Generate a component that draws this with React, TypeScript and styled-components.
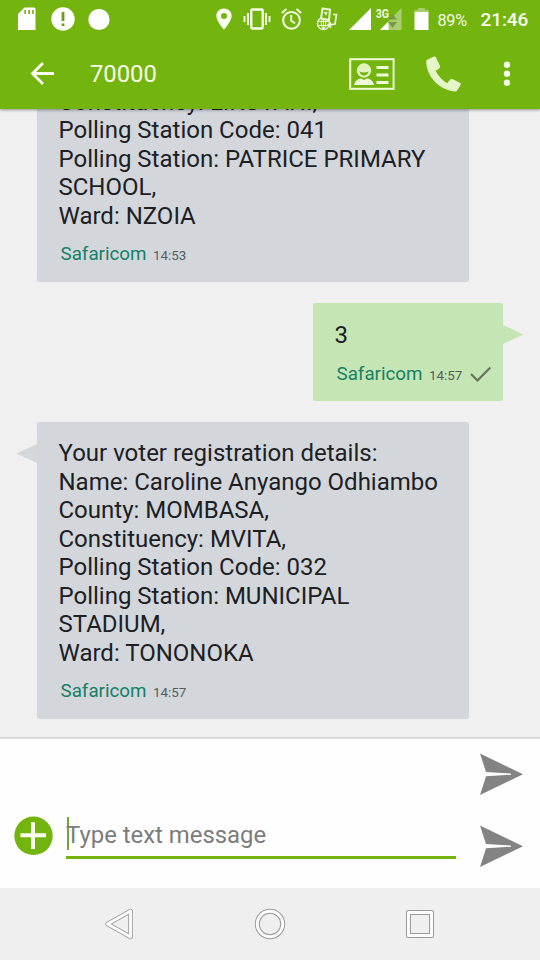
import React from "react";
import styled, { createGlobalStyle } from "styled-components";

const GREEN = "#74b40f";

const GlobalStyle = createGlobalStyle`
  * { box-sizing: border-box; }
  body { margin: 0; background: #f0f0f0; font-family: Roboto, "Liberation Sans", sans-serif; }
`;

const Screen = styled.main`
  display: flex;
  flex-direction: column;
  width: 540px;
  height: 960px;
  overflow: hidden;
  background: #f0f0f0;
`;

const Header = styled.header`
  flex: none;
  height: 109px;
  background: ${GREEN};
  color: #fff;
  box-shadow: 0 1px 3px rgba(0, 0, 0, 0.4);
  z-index: 1;
`;

const StatusBar = styled.div`
  display: flex;
  align-items: center;
  height: 38px;
  padding-left: 17px;
`;

const Icon = styled.svg<{ $before?: number }>`
  display: block;
  flex: none;
  margin-left: ${(p) => p.$before ?? 0}px;
  overflow: visible;
`;

const Battery = styled.span`
  margin-left: 9px;
  width: 34px;
  padding-top: 2px;
  font-size: 16.3px;
  letter-spacing: -0.3px;
  color: #f3fbe2;
`;

const Clock = styled.span`
  margin-left: 9px;
  padding-top: 1px;
  font-size: 19px;
  font-weight: 500;
  letter-spacing: -0.1px;
  color: #f8fdec;
`;

const TitleBar = styled.div`
  display: flex;
  align-items: center;
  height: 71px;
  padding-left: 30px;
`;

const Title = styled.h1`
  margin: 0 0 0 35px;
  width: 224px;
  font-size: 23.8px;
  font-weight: 400;
  line-height: 28px;
  color: #f7fde9;
`;

const Thread = styled.section`
  flex: none;
  display: flex;
  flex-direction: column;
  justify-content: flex-end;
  gap: 21px;
  height: 628px;
  padding: 0 37px 18px;
  overflow: hidden;
`;

const Bubble = styled.article<{ $sent?: boolean }>`
  position: relative;
  flex: none;
  align-self: ${(p) => (p.$sent ? "flex-end" : "flex-start")};
  width: ${(p) => (p.$sent ? 190 : 432)}px;
  padding: ${(p) => (p.$sent ? "18px 0 15px 21.5px" : "17.5px 0 16px 21.5px")};
  border-radius: 3px;
  background: ${(p) => (p.$sent ? "#c5e5b4" : "#d3d7dc")};
  box-shadow: 0 0 1px ${(p) => (p.$sent ? "#d5edc9" : "#dde0e3")};
`;

const Tail = styled.svg<{ $sent?: boolean }>`
  position: absolute;
  top: 22px;
  ${(p) => (p.$sent ? "left: 100%;" : "right: 100%;")}
`;

const Line = styled.p`
  margin: 0;
  font-size: 24px;
  line-height: 28.5px;
  white-space: nowrap;
  color: #1c2023;
`;

const Meta = styled.footer`
  display: flex;
  align-items: baseline;
  height: 24px;
  margin-top: 12px;
  padding-left: 2px;
  line-height: 24px;
`;

const Carrier = styled.span`
  width: 92.5px;
  font-size: 18.8px;
  color: #148064;
`;

const Time = styled.time`
  font-size: 13.4px;
  color: #565c5c;
`;

const Composer = styled.section`
  flex: none;
  display: flex;
  align-items: flex-end;
  height: 151px;
  padding: 0 17px 20px 14px;
  border-top: 2px solid #dcdcdc;
  background: #fefefe;
`;

const AddButton = styled.button`
  width: 39px;
  height: 39px;
  margin: 0 13px 13px 0;
  padding: 0;
  border: 0;
  background: none;
`;

const Field = styled.div`
  display: flex;
  align-items: flex-start;
  width: 390px;
  height: 43px;
  margin-bottom: 9px;
  border-bottom: 3px solid ${GREEN};
`;

const Caret = styled.span`
  flex: none;
  width: 2px;
  height: 33px;
  margin: 1px -2.5px 0 0.5px;
  background: #75a43b;
`;

const Placeholder = styled.span`
  font-size: 23.9px;
  line-height: 38px;
  white-space: nowrap;
  color: #7c7c7c;
`;

const SendStack = styled.div`
  display: flex;
  flex-direction: column;
  gap: 29px;
  margin-left: 24px;
`;

const NavBar = styled.nav`
  flex: 1;
  display: flex;
  align-items: center;
  justify-content: center;
  gap: 118px;
  background: #efefef;
`;

type Message = { sent?: boolean; lines: string[]; time: string };

const messages: Message[] = [
  {
    lines: [
      "Constituency: LIKUYANI,",
      "Polling Station Code: 041",
      "Polling Station: PATRICE PRIMARY",
      "SCHOOL,",
      "Ward: NZOIA",
    ],
    time: "14:53",
  },
  { sent: true, lines: ["3"], time: "14:57" },
  {
    lines: [
      "Your voter registration details:",
      "Name: Caroline Anyango Odhiambo",
      "County: MOMBASA,",
      "Constituency: MVITA,",
      "Polling Station Code: 032",
      "Polling Station: MUNICIPAL",
      "STADIUM,",
      "Ward: TONONOKA",
    ],
    time: "14:57",
  },
];

const SendIcon = () => (
  <Icon width="43" height="43" viewBox="0 0 43 43">
    <path d="M0 0.5 L43 21.2 L0 42 L6 23.2 L31 21.8 V20.6 L6 19 Z" fill="#838383" />
  </Icon>
);

const StatusIcons = () => (
  <>
    <Icon width="19" height="24" viewBox="0 0 19 24">
      <path d="M7.5 0.5 H17 Q18.5 .5 18.5 2 V23 H1 V7 Z" fill="#fff" />
      <path d="M8.2 3V7M12.1 3V7M16 3V7" stroke={GREEN} strokeWidth="1.7" />
    </Icon>
    <Icon $before={15} width="24" height="24" viewBox="0 0 24 24">
      <circle cx="12" cy="12" r="11.7" fill="#fff" />
      <path d="M12 5V14M12 16.5V19" stroke="#6d9826" strokeWidth="2.8" />
    </Icon>
    <Icon $before={13} width="22" height="22" viewBox="0 0 22 22">
      <circle cx="11" cy="11.5" r="10.6" fill="#fff" />
    </Icon>
    <Icon $before={106} width="16" height="22" viewBox="0 0 16 22">
      <path fillRule="evenodd" d="M8 .5C3.5 .5.3 3.7.3 8 .3 13 8 21.7 8 21.7S15.7 13 15.7 8C15.7 3.7 12.5.5 8 .5ZM8 5A3 3 0 1 1 8 11A3 3 0 0 1 8 5Z" fill="#f9ffee" />
    </Icon>
    <Icon $before={11} width="28" height="22" viewBox="0 0 28 22">
      <rect x="8.3" y="1.5" width="11.4" height="19" rx="1" fill="none" stroke="#f7fde9" strokeWidth="2.3" />
      <path d="M5 5V17M1.5 8V14M23 5V17M26.5 8V14" stroke="#f7fde9" strokeWidth="1.9" />
    </Icon>
    <Icon $before={10} width="21" height="22" viewBox="0 0 21 22" fill="none" stroke="#f3fbe2">
      <circle cx="10.5" cy="12.3" r="8.4" strokeWidth="2" />
      <path d="M.8 5L5.5 1M20.2 5L15.5 1M10.2 7V12.8L14 15.2" strokeWidth="1.9" />
    </Icon>
    <Icon $before={14} width="22" height="24" viewBox="0 0 22 24" fill="none" stroke="#ecf8d7" strokeWidth="1.4">
      <circle cx="7.5" cy="16.5" r="6" />
      <path d="M2 14.5H13M2 18.5H13M7.5 10.5V22.5M7.5 10.5Q2.8 16.5 7.5 22.5Q12.2 16.5 7.5 10.5" strokeWidth="1" />
      <path d="M6.5 1.5L14 2.5L13 13L5 11.5Z" fill={GREEN} strokeWidth="2" />
      <path d="M8 5L11.5 5.4L9.8 8.3Z" fill="#ecf8d7" strokeWidth=".5" />
      <path d="M17 7.5H20.5L19 17L12.5 18.2M15 15.5L12 18.2L15.2 20.5" strokeWidth="1.7" />
    </Icon>
    <Icon $before={10.5} width="22" height="22" viewBox="0 0 22 22">
      <path d="M22 0V22H0Z" fill="#fff" />
    </Icon>
    <Icon $before={4} width="27" height="22" viewBox="0 0 27 22">
      <path d="M26.5 0V22H5Z" fill="#a9cf6d" />
      <path d="M13.5 13.6V22H5Z" fill="#fff" />
      <path d="M17.5 6L22 11.5H13ZM13 14H22L17.5 20Z" fill="#779949" />
      <text x="0.7" y="9.8" fontSize="12" fontWeight="700" textLength="13.3" lengthAdjust="spacingAndGlyphs" fill="#eef9dc">3G</text>
    </Icon>
    <Icon $before={12} width="15" height="22" viewBox="0 0 15 22">
      <path d="M4 0H11V2H14.5V5H.5V2H4Z" fill="#a9cf6d" />
      <path d="M.5 4H14.5V22H.5Z" fill="#fff" />
    </Icon>
  </>
);

export default function App() {
  return (
    <Screen>
      <GlobalStyle />
      <Header>
        <StatusBar>
          <StatusIcons />
          <Battery>89%</Battery>
          <Clock>21:46</Clock>
        </StatusBar>
        <TitleBar>
          <Icon width="25" height="24" viewBox="0 0 25 24">
            <path d="M24 11.5H2.5M13 1L2.5 11.5L13 22" fill="none" stroke="#fbfff2" strokeWidth="2.8" />
          </Icon>
          <Title>70000</Title>
          <Icon $before={35} width="46" height="32" viewBox="0 0 46 32">
            <rect x="1.2" y="1.2" width="43.4" height="29.6" fill="none" stroke="#effad9" strokeWidth="2" />
            <circle cx="15" cy="12.5" r="7.2" fill="#dff3bb" />
            <path d="M10.5 13.5Q15 15.5 19.5 13.5Q18.5 17.5 15 17.5T10.5 13.5Z" fill={GREEN} />
            <path d="M5 27Q6.5 21 12 20.5L15 22L18 20.5Q23.5 21 25 27Z" fill="#effad9" />
            <path d="M27.5 9.5H39.5M27.5 17H39.5M27.5 24.5H39.5" stroke="#effad9" strokeWidth="2.8" />
          </Icon>
          <Icon $before={31} width="36" height="36" viewBox="0 0 36 36">
            <path d="M1 3.8L8 .6Q9.3 0 10 1.5L14 10Q14.5 11.5 13.2 12.4L9.7 14.8Q13.2 22.3 21.2 27.3L24.2 23.4Q25 22.3 26.4 22.9L34.2 27Q35.3 27.6 34.6 29L31.3 34.3Q30.3 35.8 28.3 35.5C13 33.5 1 21 .2 6Q0 4.4 1 3.8Z" fill="#e4f5c7" />
          </Icon>
          <Icon $before={41} width="8" height="28" viewBox="0 0 8 28">
            <circle cx="4" cy="4.7" r="3.2" fill="#f5fde6" />
            <circle cx="4" cy="13.7" r="3.2" fill="#f5fde6" />
            <circle cx="4" cy="22.7" r="3.2" fill="#f5fde6" />
          </Icon>
        </TitleBar>
      </Header>

      <Thread>
        {messages.map((m, i) => (
          <Bubble key={i} $sent={m.sent}>
            {(m.sent || i === messages.length - 1) && (
              <Tail $sent={m.sent} width="21" height="20" viewBox="0 0 21 20">
                <path
                  d={m.sent ? "M0 0L20.5 9.5L0 19Z" : "M21 0L0 9.5L21 19Z"}
                  fill={m.sent ? "#c5e5b4" : "#d5d8db"}
                />
              </Tail>
            )}
            {m.lines.map((line) => (
              <Line key={line}>{line}</Line>
            ))}
            <Meta>
              <Carrier>Safaricom</Carrier>
              <Time>{m.time}</Time>
              {m.sent && (
                <Icon $before={8} width="21" height="16" viewBox="0 0 21 16">
                  <path d="M1 10L7.5 16.5L20.3 3.5" fill="none" stroke="#65745d" strokeWidth="2.2" />
                </Icon>
              )}
            </Meta>
          </Bubble>
        ))}
      </Thread>

      <Composer>
        <AddButton aria-label="Add attachment">
          <Icon width="39" height="39" viewBox="0 0 39 39">
            <circle cx="19.5" cy="19.8" r="19.2" fill={GREEN} />
            <path d="M6.5 19.3H32M19 6.3V33" stroke="#fafff0" strokeWidth="4" />
          </Icon>
        </AddButton>
        <Field>
          <Caret />
          <Placeholder>Type text message</Placeholder>
        </Field>
        <SendStack>
          <SendIcon />
          <SendIcon />
        </SendStack>
      </Composer>

      <NavBar>
        <Icon width="32" height="32" viewBox="0 0 32 32">
          <path d="M3.5 16L26.5 3V29Z" fill="none" stroke="#9b9b9b" strokeWidth="4.5" strokeLinejoin="round" />
          <path d="M3.5 16L26.5 3V29Z" fill="none" stroke="#fbfbfb" strokeWidth="2.8" strokeLinejoin="round" />
        </Icon>
        <Icon width="32" height="32" viewBox="0 0 32 32">
          <circle cx="16" cy="16" r="12.7" fill="none" stroke="#9b9b9b" strokeWidth="5" />
          <circle cx="16" cy="16" r="12.7" fill="none" stroke="#fbfbfb" strokeWidth="3" />
        </Icon>
        <Icon width="32" height="32" viewBox="0 0 32 32">
          <rect x="4.5" y="4.5" width="23" height="23" fill="none" stroke="#9b9b9b" strokeWidth="5" strokeLinejoin="round" />
          <rect x="4.5" y="4.5" width="23" height="23" fill="none" stroke="#fbfbfb" strokeWidth="3" strokeLinejoin="round" />
        </Icon>
      </NavBar>
    </Screen>
  );
}
